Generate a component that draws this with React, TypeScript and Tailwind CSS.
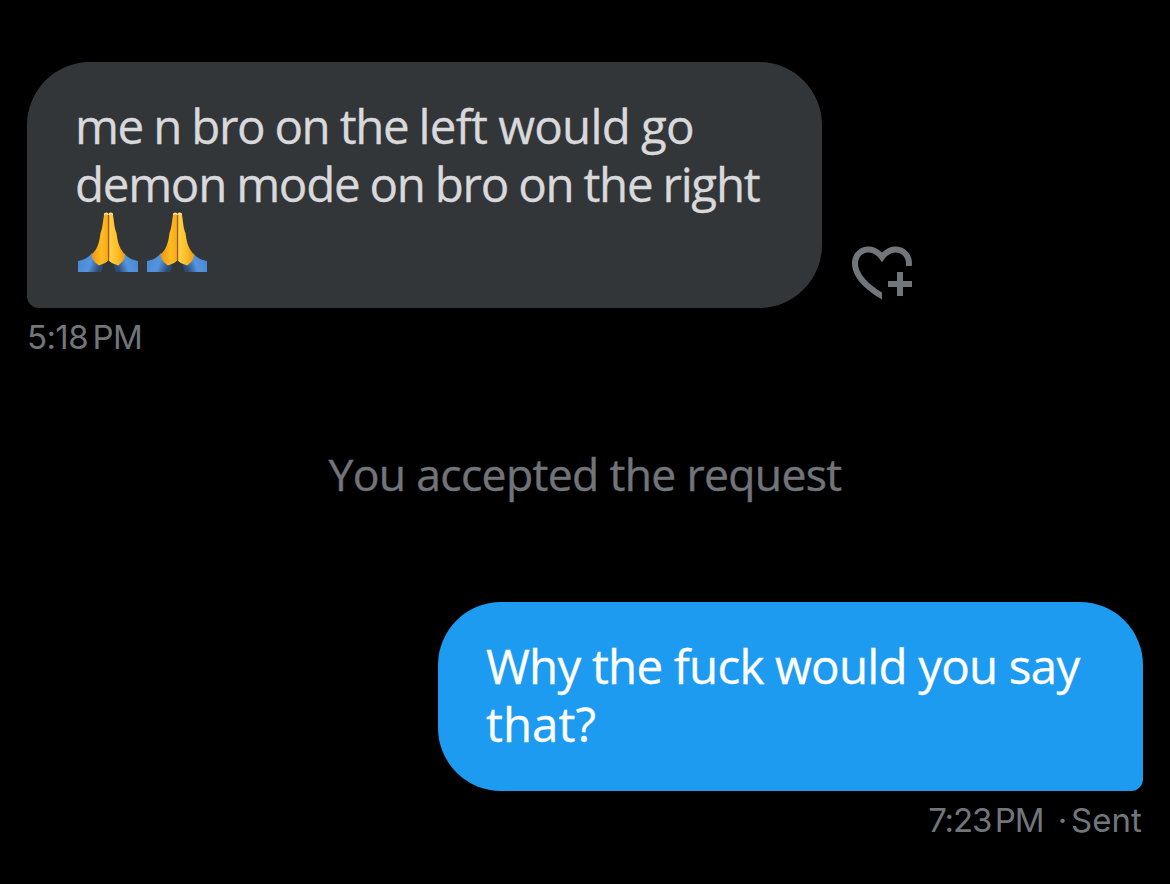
import clsx from "clsx";
import type { ReactNode } from "react";

interface BubbleProps {
  side: "left" | "right";
  children: ReactNode;
}

function Bubble({ side, children }: BubbleProps) {
  return (
    <div
      className={clsx(
        "rounded-t-[63px] px-12 pt-[35px] text-[47.5px] leading-[58px] whitespace-nowrap [-webkit-text-stroke:0.3px]",
        side === "left"
          ? "h-[246px] w-[795px] rounded-br-[63px] rounded-bl-[12px] bg-[#333639] text-[#d9d9dc]"
          : "h-[189px] w-[705px] rounded-bl-[63px] rounded-br-[12px] bg-[#1d9bf0] text-white"
      )}
    >
      {children}
    </div>
  );
}

function FoldedHands() {
  return (
    <svg viewBox="0 0 60 60" className="h-[60px] w-[60px]" role="img" aria-label="folded hands">
      <defs>
        <linearGradient id="skin" x1="0" x2="1" y1="0" y2="0">
          <stop offset="0" stopColor="#f0940c" />
          <stop offset="0.3" stopColor="#ffbd22" />
          <stop offset="0.46" stopColor="#f9ab1e" />
          <stop offset="0.56" stopColor="#ffd044" />
          <stop offset="0.75" stopColor="#ffc02a" />
          <stop offset="1" stopColor="#f09a10" />
        </linearGradient>
        <linearGradient id="sleeveLeft" x1="0" x2="1" y1="0" y2="0.3">
          <stop offset="0" stopColor="#4583cf" />
          <stop offset="0.6" stopColor="#5595df" />
          <stop offset="1" stopColor="#2d4a72" />
        </linearGradient>
        <linearGradient id="sleeveRight" x1="1" x2="0" y1="0" y2="0.3">
          <stop offset="0" stopColor="#4583cf" />
          <stop offset="0.6" stopColor="#5595df" />
          <stop offset="1" stopColor="#2d4a72" />
        </linearGradient>
      </defs>
      <path d="M0 49C6 48 10 46 14 41L25 52C25 55 24 58 23 60H0Z" fill="url(#sleeveLeft)" />
      <path d="M60 49C54 48 50 46 46 41L36 52C36 55 37 58 38 60H60Z" fill="url(#sleeveRight)" />
      <path
        d="M30.500 2C29.500 0 26.500 0 26 3C25 9 24.500 17 22.500 21C21.500 29 20 34 17.500 38L13.500 43C14 47 17 51 21 53.500C25 52 29 50.500 30.500 48C32 50.500 36 52 40 53.500C44 51 47 47 47 43L43.500 38C41 34 39.500 29 38.500 21C36.500 17 36 9 35 3C34.500 0 31.500 0 30.500 2Z"
        fill="url(#skin)"
      />
      <path d="M30.500 3V48" stroke="#9c5a08" strokeWidth="1.300" />
      <path d="M26.500 3C26.500 .7 29.500 .7 29.500 3M31.500 3C31.500 .7 34.500 .7 34.500 3" fill="none" stroke="#ffe6ae" strokeWidth="1.300" />
    </svg>
  );
}

function AddReaction() {
  return (
    <svg viewBox="0 0 24 24" className="h-[72px] w-[72px] fill-[#71767b]" role="img" aria-label="Add reaction">
      <path d="M17 12v3h-2.998v2h3v3h2v-3h3v-2h-3.001v-3H17zm-5 6.839c-3.871-2.34-6.053-4.639-7.127-6.609-1.112-2.04-1.031-3.7-.479-4.82.561-1.13 1.667-1.84 2.91-1.91 1.222-.06 2.68.51 3.892 2.16l.806 1.09.805-1.09c1.211-1.65 2.668-2.22 3.89-2.16 1.242.07 2.347.78 2.908 1.91.334.677.49 1.554.321 2.59h2.011c.153-1.283-.039-2.469-.539-3.48-.887-1.79-2.647-2.91-4.601-3.01-1.65-.09-3.367.56-4.796 2.01-1.43-1.45-3.147-2.1-4.798-2.01-1.954.1-3.714 1.22-4.601 3.01-.896 1.81-.846 4.17.514 6.67 1.353 2.48 4.003 5.12 8.382 7.67l.502.299v-2.32z" />
    </svg>
  );
}

export default function App() {
  return (
    <main className="flex h-[884px] w-[1170px] flex-col overflow-hidden bg-black px-[27px] pt-[62px] font-['Open_Sans',sans-serif]">
      <div className="flex items-end gap-6">
        <Bubble side="left">
          <p className="tracking-[-1.4px] [word-spacing:-0.6px]">
            me n bro on the <span className="tracking-[-0.75px]">left would go</span>
          </p>
          <p className="tracking-[-1.28px] [word-spacing:-0.9px]">demon mode on bro on the right</p>
          <div className="-mt-px flex gap-[9px] pl-[3px]">
            <FoldedHands />
            <FoldedHands />
          </div>
        </Bubble>
        <AddReaction />
      </div>
      <p className="mt-[9px] h-10 font-['Inter',sans-serif] text-[33px] leading-10 tracking-[-0.6px] whitespace-nowrap text-[#71767b]">
        5:18<span className="tracking-[-1.5px]">{"\u2009"}</span>PM
      </p>
      <p className="mt-[87px] h-[60px] text-center text-[44.5px] leading-[60px] tracking-[-0.67px] whitespace-nowrap text-[#717479] [-webkit-text-stroke:0.4px]">
        You accepted the request
      </p>
      <div className="mt-[98px] self-end">
        <Bubble side="right">
          <p className="tracking-[-0.75px] [word-spacing:-0.2px]">Why the fuck would you say</p>
          <p>that?</p>
        </Bubble>
      </div>
      <p className="mt-[9px] h-10 pr-px text-right font-['Inter',sans-serif] text-[33px] leading-10 tracking-[-1.1px] whitespace-nowrap text-[#71767b]">
        7:23<span className="tracking-[-2.5px]">{"\u2009"}</span>PM{" "}
        <span className="ml-[6px] tracking-[-2.8px]">· </span>
        <span className="tracking-[0.1px]">Sent</span>
      </p>
    </main>
  );
}
